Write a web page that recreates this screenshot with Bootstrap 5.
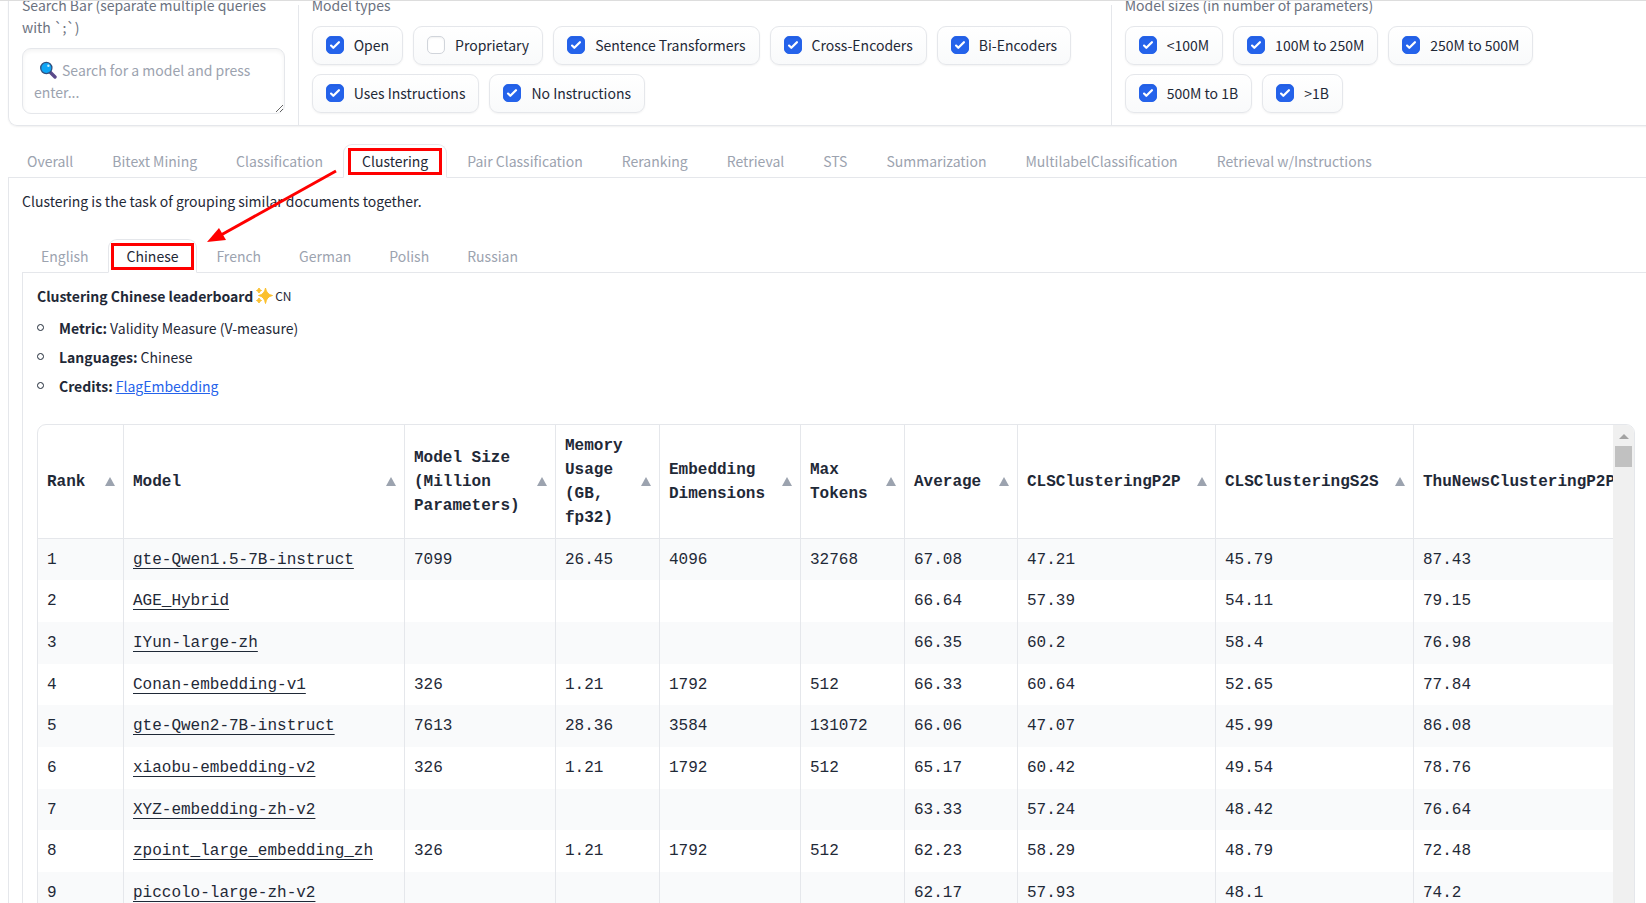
<!DOCTYPE html>
<html lang="en">
<head>
<meta charset="utf-8">
<meta name="viewport" content="width=device-width, initial-scale=1">
<title>Embedding leaderboard</title>
<link href="https://cdn.jsdelivr.net/npm/bootstrap@5.3.0/dist/css/bootstrap.min.css" rel="stylesheet">
<style>
  :root { --line: #e5e7eb; --ink: #1f2937; --muted: #9ca3af; --soft: #6b7280; }
  html, body { height: 100%; }
  body { overflow: hidden; border-top: 1px solid #ddd; background: #fff; color: var(--ink);
    font-family: "Noto Sans CJK SC", "Open Sans", sans-serif; font-size: 14px; line-height: 22px; }
  /* the app is slightly wider than the window and scrolled down a little */
  .app-shell { margin: -7px -17px 0 8px; }
  .filters { display: grid; grid-template-columns: 289fr 814fr 552fr; border: 1px solid var(--line); border-top: 0;
    border-radius: 0 0 9px 9px; box-shadow: 0 1px 2px rgba(0,0,0,.06); }
  .filters > * { padding: 0 13px 11px; min-width: 0; }
  .filters > * + * { border-left: 1px solid var(--line); }
  .caption { display: block; color: var(--soft); font-size: 14px; line-height: 22px; margin: 0 0 10px; float: none; }
  .search-box { height: 66px; border: 1px solid var(--line); border-radius: 9px; padding: 10px 11px; font-size: 14px;
    line-height: 22px; text-indent: 28px; box-shadow: inset 0 2px 4px rgba(0,0,0,.05); overflow: hidden; resize: vertical; }
  .search-box::placeholder { color: var(--muted); opacity: 1; }
  .glass { left: 17px; top: 13px; }
  .chips { gap: 9px 10px; }
  .chip { height: 39px; gap: 10px; padding: 0 13px 2px; border: 1px solid var(--line); border-radius: 9px;
    background: linear-gradient(#fff, #f9fafb); box-shadow: 0 1px 2px rgba(0,0,0,.05); white-space: nowrap; }
  .chip .form-check-input { width: 18px; height: 18px; margin: 0; border: 1px solid #d1d5db; border-radius: 5px; box-shadow: inset 0 1px 2px rgba(0,0,0,.06); }
  .chip .form-check-input:checked { background-color: #2563eb; border-color: #2563eb; background-size: 18px;
    background-image: url("data:image/svg+xml,%3Csvg viewBox='0 0 16 16' fill='white' xmlns='http://www.w3.org/2000/svg'%3E%3Cpath d='M12.207 4.793a1 1 0 010 1.414l-5 5a1 1 0 01-1.414 0l-2-2a1 1 0 011.414-1.414L6.5 9.086l4.293-4.293a1 1 0 011.414 0z'/%3E%3C/svg%3E"); }
  .tabs { --bs-nav-tabs-border-color: var(--line); flex-wrap: nowrap; }
  .tabs-task { margin-top: 18px; gap: 1px; }
  .tabs-language { margin-top: 27px; }
  .tabs .nav-link { height: 34px; padding: 0 18px; border-radius: 9px 9px 0 0; color: var(--muted); font-size: 14px; line-height: 32px; white-space: nowrap; }
  .tabs .nav-link.active { color: var(--ink); background: #fff; border-color: var(--line) var(--line) #fff; }
  .panel { border: 1px solid var(--line); border-top: 0; padding: 12px 13px; }
  .panel .panel { padding-left: 14px; }
  .marked::after { content: ""; position: absolute; inset: 3px 4px 2px; border: 3px solid #f00; }
  .tabs-language .marked::after { inset: 3px 2px 2px; }
  .pointer { left: 198px; top: -9px; z-index: 3; pointer-events: none; }
  .facts { list-style: none; margin: 6px 0 0; padding: 0; }
  .facts li { display: flex; align-items: center; height: 29px; gap: 3px; }
  .facts li::before { content: ""; width: 7px; height: 7px; margin-right: 12px; border: 1px solid var(--ink); border-radius: 50%; }
  .facts a { color: #2563eb; }
  .title-row { gap: 2px; }
  .country { font-size: 12px; }
  .board { margin-top: 24px; border: 1px solid var(--line); border-radius: 9px; overflow: hidden; }
  .scores { width: 1600px; flex: none; table-layout: fixed; border-collapse: separate; border-spacing: 0;
    font: 16px/24px "Liberation Mono", monospace; color: var(--ink); }
  .scores th, .scores td { padding: 0 9px; border-right: 1px solid var(--line); white-space: nowrap; }
  .scores th { height: 114px; padding-right: 8px; border-bottom: 1px solid var(--line); vertical-align: middle; }
  .scores td { height: 42px; }
  .scores tbody tr:nth-child(3n+1) td { height: 41px; }
  .scores tbody tr:nth-child(odd) { background: #f9fafb; }
  .scores a { color: inherit; text-underline-offset: 4px; text-decoration-thickness: 1px; }
  .scores .sorter { display: flex; align-items: center; justify-content: space-between; width: 100%; border: 0; padding: 0;
    background: none; color: inherit; font: inherit; font-weight: 700; text-align: left; }
  .sorter::after { content: ""; flex: none; border: 5px solid transparent; border-top: 0; border-bottom: 9px solid var(--muted); }
  .track { width: 21px; flex: none; background: #f0f0f0; padding-top: 9px; }
  .track-up { border: 5px solid transparent; border-top: 0; border-bottom: 5px solid #a3a3a3; }
  .track-thumb { width: 17px; height: 21px; margin-top: 7px; background: #c1c1c1; }
</style>
</head>
<body>
<div class="app-shell">
  <form class="filters">
    <div>
      <label class="caption" for="q">Search Bar (separate multiple queries with `;`)</label>
      <div class="position-relative">
        <textarea class="form-control search-box" id="q" placeholder="Search for a model and press enter..."></textarea>
        <svg class="glass position-absolute" width="18" height="18" viewBox="0 0 18 18" aria-hidden="true"><path d="M11 11l5 5" stroke="#5b4a8a" stroke-width="3.4" stroke-linecap="round"/><circle cx="7.3" cy="7" r="5.6" fill="#0ea5f5" stroke="#31507f" stroke-width="1.3"/><circle cx="9.4" cy="4.8" r="1.2" fill="#c9f1ff"/></svg>
      </div>
    </div>
    <fieldset>
      <legend class="caption">Model types</legend>
      <div class="chips d-flex flex-wrap">
        <label class="chip d-flex align-items-center"><input class="form-check-input" type="checkbox" checked>Open</label>
        <label class="chip d-flex align-items-center"><input class="form-check-input" type="checkbox">Proprietary</label>
        <label class="chip d-flex align-items-center"><input class="form-check-input" type="checkbox" checked>Sentence Transformers</label>
        <label class="chip d-flex align-items-center"><input class="form-check-input" type="checkbox" checked>Cross-Encoders</label>
        <label class="chip d-flex align-items-center"><input class="form-check-input" type="checkbox" checked>Bi-Encoders</label>
        <label class="chip d-flex align-items-center"><input class="form-check-input" type="checkbox" checked>Uses Instructions</label>
        <label class="chip d-flex align-items-center"><input class="form-check-input" type="checkbox" checked>No Instructions</label>
      </div>
    </fieldset>
    <fieldset>
      <legend class="caption">Model sizes (in number of parameters)</legend>
      <div class="chips d-flex flex-wrap pe-5">
        <label class="chip d-flex align-items-center"><input class="form-check-input" type="checkbox" checked>&lt;100M</label>
        <label class="chip d-flex align-items-center"><input class="form-check-input" type="checkbox" checked>100M to 250M</label>
        <label class="chip d-flex align-items-center"><input class="form-check-input" type="checkbox" checked>250M to 500M</label>
        <label class="chip d-flex align-items-center"><input class="form-check-input" type="checkbox" checked>500M to 1B</label>
        <label class="chip d-flex align-items-center"><input class="form-check-input" type="checkbox" checked>&gt;1B</label>
      </div>
    </fieldset>
  </form>

  <div class="nav nav-tabs tabs tabs-task" role="tablist">
    <button class="nav-link" type="button" role="tab">Overall</button>
    <button class="nav-link" type="button" role="tab">Bitext Mining</button>
    <button class="nav-link" type="button" role="tab">Classification</button>
    <button class="nav-link active marked position-relative" type="button" role="tab" aria-selected="true">Clustering</button>
    <button class="nav-link" type="button" role="tab">Pair Classification</button>
    <button class="nav-link" type="button" role="tab">Reranking</button>
    <button class="nav-link" type="button" role="tab">Retrieval</button>
    <button class="nav-link" type="button" role="tab">STS</button>
    <button class="nav-link" type="button" role="tab">Summarization</button>
    <button class="nav-link" type="button" role="tab">MultilabelClassification</button>
    <button class="nav-link" type="button" role="tab">Retrieval w/Instructions</button>
  </div>
  <div class="panel position-relative">
    <svg class="pointer position-absolute" width="132" height="76" viewBox="0 0 132 76" aria-hidden="true"><path d="M129 2L14 66" stroke="#f00" stroke-width="3"/><path d="M0 73L12 59L19 71Z" fill="#f00"/></svg>
    <p class="mb-0">Clustering is the task of grouping similar documents together.</p>
    <div class="nav nav-tabs tabs tabs-language" role="tablist">
      <button class="nav-link" type="button" role="tab">English</button>
      <button class="nav-link active marked position-relative" type="button" role="tab" aria-selected="true">Chinese</button>
      <button class="nav-link" type="button" role="tab">French</button>
      <button class="nav-link" type="button" role="tab">German</button>
      <button class="nav-link" type="button" role="tab">Polish</button>
      <button class="nav-link" type="button" role="tab">Russian</button>
    </div>
    <div class="panel">
      <div class="title-row d-flex align-items-center"><strong>Clustering Chinese leaderboard</strong>
        <svg width="18" height="18" viewBox="0 0 18 18" fill="#fbc02d" aria-hidden="true"><path d="M10.500 1Q11.500 7.500 17.500 8.500Q11.500 9.500 10.500 16.500Q9.500 9.500 3.500 8.500Q9.500 7.500 10.500 1ZM4 1Q4.400 3.100 6.500 3.500Q4.400 3.900 4 6Q3.600 3.900 1.500 3.500Q3.600 3.100 4 1ZM4 11Q4.400 13 6.500 13.500Q4.400 14 4 16Q3.600 14 1.500 13.500Q3.600 13 4 11Z" stroke="#fbc02d" stroke-width="1"/></svg>
        <span class="country">CN</span></div>
      <ul class="facts">
        <li><strong>Metric:</strong> Validity Measure (V-measure)</li>
        <li><strong>Languages:</strong> Chinese</li>
        <li><strong>Credits:</strong> <a href="#">FlagEmbedding</a></li>
      </ul>
      <div class="board d-flex">
        <div class="d-flex flex-grow-1 overflow-hidden">
          <table class="scores">
            <colgroup><col style="width:86px"><col style="width:281px"><col style="width:151px"><col style="width:104px"><col style="width:141px"><col style="width:104px"><col style="width:113px"><col style="width:198px"><col style="width:198px"><col></colgroup>
            <thead><tr>
              <th><button class="sorter" type="button">Rank</button></th>
              <th><button class="sorter" type="button">Model</button></th>
              <th><button class="sorter" type="button">Model Size<br>(Million<br>Parameters)</button></th>
              <th><button class="sorter" type="button">Memory<br>Usage<br>(GB,<br>fp32)</button></th>
              <th><button class="sorter" type="button">Embedding<br>Dimensions</button></th>
              <th><button class="sorter" type="button">Max<br>Tokens</button></th>
              <th><button class="sorter" type="button">Average</button></th>
              <th><button class="sorter" type="button">CLSClusteringP2P</button></th>
              <th><button class="sorter" type="button">CLSClusteringS2S</button></th>
              <th><button class="sorter" type="button">ThuNewsClusteringP2P</button></th>
            </tr></thead>
            <tbody>
              <tr><td>1</td><td><a href="#">gte-Qwen1.5-7B-instruct</a></td><td>7099</td><td>26.45</td><td>4096</td><td>32768</td><td>67.08</td><td>47.21</td><td>45.79</td><td>87.43</td></tr>
              <tr><td>2</td><td><a href="#">AGE_Hybrid</a></td><td></td><td></td><td></td><td></td><td>66.64</td><td>57.39</td><td>54.11</td><td>79.15</td></tr>
              <tr><td>3</td><td><a href="#">IYun-large-zh</a></td><td></td><td></td><td></td><td></td><td>66.35</td><td>60.2</td><td>58.4</td><td>76.98</td></tr>
              <tr><td>4</td><td><a href="#">Conan-embedding-v1</a></td><td>326</td><td>1.21</td><td>1792</td><td>512</td><td>66.33</td><td>60.64</td><td>52.65</td><td>77.84</td></tr>
              <tr><td>5</td><td><a href="#">gte-Qwen2-7B-instruct</a></td><td>7613</td><td>28.36</td><td>3584</td><td>131072</td><td>66.06</td><td>47.07</td><td>45.99</td><td>86.08</td></tr>
              <tr><td>6</td><td><a href="#">xiaobu-embedding-v2</a></td><td>326</td><td>1.21</td><td>1792</td><td>512</td><td>65.17</td><td>60.42</td><td>49.54</td><td>78.76</td></tr>
              <tr><td>7</td><td><a href="#">XYZ-embedding-zh-v2</a></td><td></td><td></td><td></td><td></td><td>63.33</td><td>57.24</td><td>48.42</td><td>76.64</td></tr>
              <tr><td>8</td><td><a href="#">zpoint_large_embedding_zh</a></td><td>326</td><td>1.21</td><td>1792</td><td>512</td><td>62.23</td><td>58.29</td><td>48.79</td><td>72.48</td></tr>
              <tr><td>9</td><td><a href="#">piccolo-large-zh-v2</a></td><td></td><td></td><td></td><td></td><td>62.17</td><td>57.93</td><td>48.1</td><td>74.2</td></tr>
            </tbody>
          </table>
        </div>
        <div class="track d-flex flex-column align-items-center" aria-hidden="true"><span class="track-up"></span><span class="track-thumb"></span></div>
      </div>
    </div>
  </div>
</div>
<script src="https://cdn.jsdelivr.net/npm/bootstrap@5.3.0/dist/js/bootstrap.bundle.min.js"></script>
</body>
</html>
